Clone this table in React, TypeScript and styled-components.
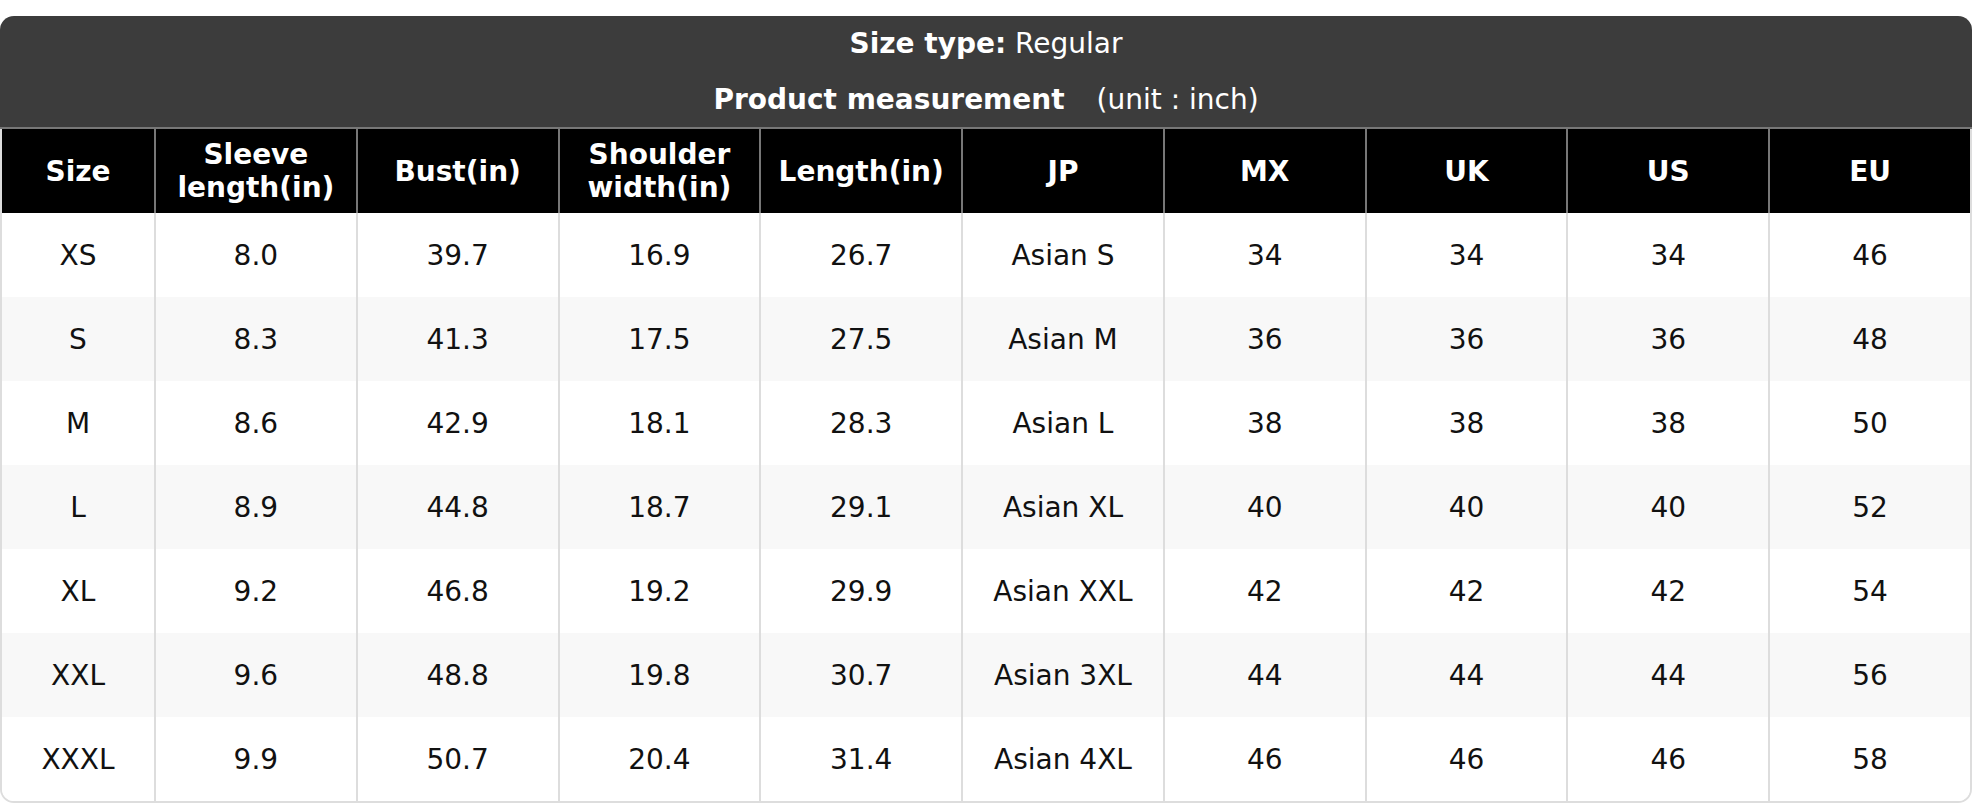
import React from "react";
import styled, { createGlobalStyle } from "styled-components";

const GlobalStyle = createGlobalStyle`
	html, body {
		margin: 0;
		padding: 0;
		background: #ffffff;
	}
	body {
		font-family: "DejaVu Sans", "Liberation Sans", sans-serif;
	}
`;

const Card = styled.div`
	margin-top: 16px;
	width: 100%;
	font-size: 28px;
	color: #111111;
`;

const Band = styled.div`
	background: #3c3c3c;
	border-radius: 14px 14px 0 0;
	border-bottom: 2px solid #777777;
	color: #ffffff;
	display: flex;
	flex-direction: column;
`;

const BandLine = styled.div<{ $h: number }>`
	height: ${(p) => p.$h}px;
	display: flex;
	align-items: center;
	justify-content: center;
	white-space: pre;
	b {
		font-weight: 700;
	}
`;

const Unit = styled.span`
	margin-left: 32px;
`;

const TableWrap = styled.div`
	border: 2px solid #dddddd;
	border-top: 0;
	border-radius: 0 0 14px 14px;
	overflow: hidden;
`;

const Table = styled.table`
	width: 100%;
	table-layout: fixed;
	border-collapse: separate;
	border-spacing: 0;
`;

const HeadCell = styled.th`
	background: #000000;
	color: #ffffff;
	font-weight: 700;
	line-height: 33px;
	text-align: center;
	vertical-align: middle;
	padding: 0 4px;
	height: 84px;
	& + & {
		border-left: 2px solid #777777;
	}
`;

const Row = styled.tr<{ $alt: boolean }>`
	background: ${(p) => (p.$alt ? "#f8f8f8" : "#ffffff")};
`;

const Cell = styled.td`
	height: 84px;
	padding: 0;
	text-align: center;
	vertical-align: middle;
	font-weight: 400;
	& + & {
		border-left: 2px solid #dddddd;
	}
`;

const headers = [
	"Size",
	"Sleeve\nlength(in)",
	"Bust(in)",
	"Shoulder\nwidth(in)",
	"Length(in)",
	"JP",
	"MX",
	"UK",
	"US",
	"EU",
];

const rows = [
	["XS", "8.0", "39.7", "16.9", "26.7", "Asian S", "34", "34", "34", "46"],
	["S", "8.3", "41.3", "17.5", "27.5", "Asian M", "36", "36", "36", "48"],
	["M", "8.6", "42.9", "18.1", "28.3", "Asian L", "38", "38", "38", "50"],
	["L", "8.9", "44.8", "18.7", "29.1", "Asian XL", "40", "40", "40", "52"],
	["XL", "9.2", "46.8", "19.2", "29.9", "Asian XXL", "42", "42", "42", "54"],
	["XXL", "9.6", "48.8", "19.8", "30.7", "Asian 3XL", "44", "44", "44", "56"],
	["XXXL", "9.9", "50.7", "20.4", "31.4", "Asian 4XL", "46", "46", "46", "58"],
];

export default function App() {
	return (
		<>
			<GlobalStyle />
			<Card>
				<Band>
					<BandLine $h={55}>
						<span>
							<b>Size type:</b> Regular
						</span>
					</BandLine>
					<BandLine $h={56}>
						<span>
							<b>Product measurement</b>
							<Unit>(unit : inch)</Unit>
						</span>
					</BandLine>
				</Band>
				<TableWrap>
					<Table>
						<colgroup>
							<col style={{ width: "152px" }} />
							{headers.slice(1).map((h) => (
								<col key={h} />
							))}
						</colgroup>
						<thead>
							<tr>
								{headers.map((h) => (
									<HeadCell key={h}>
										{h.split("\n").map((line, i) => (
											<div key={i}>{line}</div>
										))}
									</HeadCell>
								))}
							</tr>
						</thead>
						<tbody>
							{rows.map((r, i) => (
								<Row key={r[0]} $alt={i % 2 === 1}>
									{r.map((v, j) => (
										<Cell key={j}>{v}</Cell>
									))}
								</Row>
							))}
						</tbody>
					</Table>
				</TableWrap>
			</Card>
		</>
	);
}
